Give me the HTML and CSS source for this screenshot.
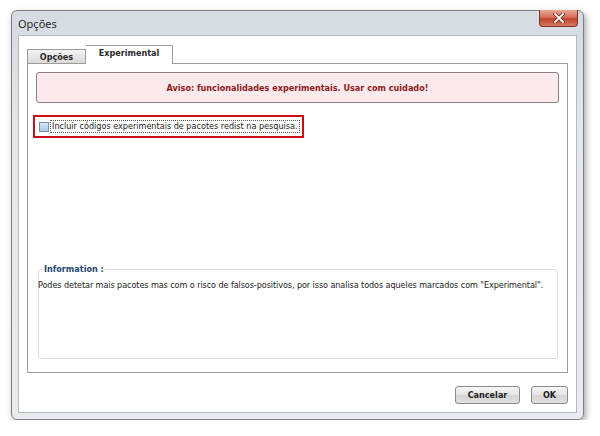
FILE: index.html
```html
<!DOCTYPE html>
<html lang="pt">
<head>
  <meta charset="UTF-8">
  <title>Opções</title>
  <link rel="stylesheet" href="styles.css">
</head>
<body>
  <div class="window">
    <div class="titlebar">
      <span class="title">Opções</span>
      <button class="close-btn">
        <svg width="12" height="10" viewBox="0 0 12 10">
          <path d="M2 1L10 9M10 1L2 9" stroke="#6b2a22" stroke-width="3.4" stroke-linecap="square"/>
          <path d="M2 1L10 9M10 1L2 9" stroke="#ffffff" stroke-width="1.8" stroke-linecap="square"/>
        </svg>
      </button>
    </div>

    <div class="client">
      <div class="tabs">
        <div class="tab">Opções</div>
        <div class="tab active">Experimental</div>
      </div>

      <div class="tab-panel">
        <div class="warning">Aviso: funcionalidades experimentais. Usar com cuidado!</div>

        <div class="check-row">
          <span class="checkbox"></span>
          <span class="check-label">Incluir códigos experimentais de pacotes redist na pesquisa.</span>
        </div>

        <div class="spacer"></div>

        <fieldset class="info">
          <legend>Information :</legend>
          <p>Podes detetar mais pacotes mas com o risco de falsos-positivos, por isso analisa todos aqueles marcados com "Experimental".</p>
        </fieldset>
      </div>

      <div class="buttons">
        <button class="btn">Cancelar</button>
        <button class="btn btn-ok">OK</button>
      </div>
    </div>
  </div>
</body>
</html>
```

FILE: styles.css
```css
body {
  margin: 0;
  background-color: #ffffff;
  font-family: 'DejaVu Sans Condensed', 'DejaVu Sans', sans-serif;
  font-size: 9px;
  color: #222;
}

.window {
  margin: 10px 0 0 11px;
  width: 573px;
  height: 410px;
  box-sizing: border-box;
  padding: 0 6px 6px 6px;
  border: 1px solid #7c8086;
  border-radius: 6px;
  background: linear-gradient(to bottom, #d6dbe1, #e4e7eb 30%, #e9ebee);
  box-shadow: 2px 3px 6px rgba(0, 0, 0, 0.35);
  display: flex;
  flex-direction: column;
}

.titlebar {
  height: 24px;
  flex-shrink: 0;
  display: flex;
  justify-content: space-between;
  align-items: flex-start;
}

.title {
  font-family: 'Noto Sans', sans-serif;
  font-size: 11px;
  color: #2a2a2a;
  margin-top: 5px;
}

.close-btn {
  width: 39px;
  height: 17px;
  margin-top: -1px;
  margin-right: -1px;
  border: 1px solid #7e3328;
  border-top: none;
  border-radius: 0 0 4px 4px;
  background: linear-gradient(to bottom, #e9a797, #d3705c 45%, #c2432c 55%, #d47a5e);
  display: flex;
  align-items: center;
  justify-content: center;
  padding: 0;
}

.client {
  flex: 1;
  background-color: #ffffff;
  border: 1px solid #b4b9bf;
  display: flex;
  flex-direction: column;
  padding: 9px 8px 0 8px;
}

.tabs {
  display: flex;
  align-items: flex-end;
  height: 18px;
}

.tab {
  height: 13px;
  width: 41px;
  padding: 0 8px;
  border: 1px solid #9c9c9c;
  border-bottom: none;
  background: linear-gradient(to bottom, #f4f4f4, #d9d9d9);
  font-weight: bold;
  color: #2a2a2a;
  line-height: 14px;
  text-align: center;
}

.tab.active {
  height: 18px;
  width: 70px;
  margin-bottom: -1px;
  background: #ffffff;
  border-left: none;
  line-height: 15px;
  position: relative;
}

.tab-panel {
  height: 310px;
  box-sizing: border-box;
  border: 1px solid #9c9c9c;
  display: flex;
  flex-direction: column;
  padding: 8px 8px 0 5px;
}

.warning {
  margin-left: 3px;
  height: 31px;
  box-sizing: border-box;
  border: 1px solid #8e7f86;
  border-radius: 3px;
  background-color: #fbe9eb;
  color: #8c1c1c;
  font-weight: bold;
  display: flex;
  align-items: center;
  justify-content: center;
}

.check-row {
  margin-top: 12px;
  align-self: flex-start;
  display: flex;
  align-items: center;
  height: 23px;
  box-sizing: border-box;
  padding: 0 2px 0 4px;
  border: 2px solid #c8101a;
}

.checkbox {
  width: 10px;
  height: 10px;
  box-sizing: border-box;
  border: 1px solid #6f8fb5;
  background: linear-gradient(to bottom, #d6e6f6, #a9c8e8);
  margin-right: 1px;
}

.check-label {
  border: 1px dotted #555;
  padding: 0 1px;
  line-height: 11px;
}

.spacer {
  flex: 1;
}

.info {
  margin: 0 1px 13px 5px;
  height: 95px;
  box-sizing: border-box;
  border: 1px solid #dcdcdc;
  border-radius: 3px;
  padding: 0;
}

.info legend {
  color: #264574;
  font-weight: bold;
  padding: 0 1px;
  margin-left: 4px;
  line-height: 11px;
}

.info p {
  margin: 4px 0 0 -1px;
  line-height: 12px;
  letter-spacing: -0.08px;
}

.buttons {
  display: flex;
  justify-content: flex-end;
  gap: 11px;
  padding-top: 13px;
}

.btn {
  height: 18px;
  width: 65px;
  padding: 0;
  border: 1px solid #8a8a8a;
  border-radius: 3px;
  background: linear-gradient(to bottom, #f6f6f6, #e4e4e4 50%, #d4d4d4 51%, #e0e0e0);
  font-family: 'DejaVu Sans Condensed', 'DejaVu Sans', sans-serif;
  font-size: 9px;
  font-weight: bold;
  color: #1e1e1e;
}

.btn-ok {
  width: 37px;
}
```
